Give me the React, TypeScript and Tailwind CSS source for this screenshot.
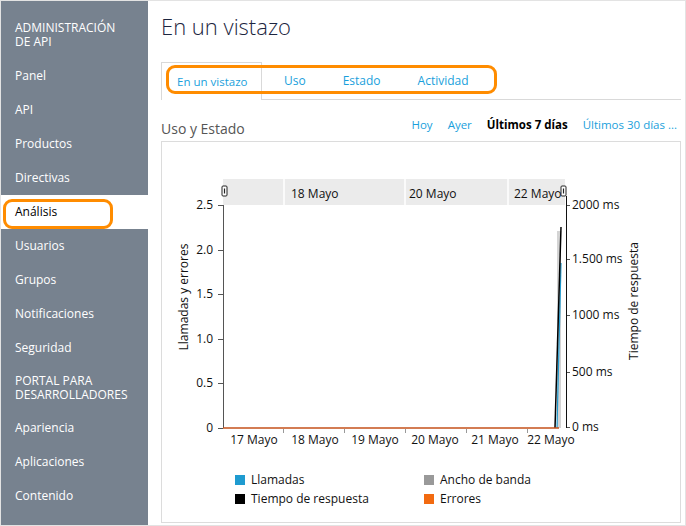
const navTop = ['Panel', 'API', 'Productos', 'Directivas', 'Análisis', 'Usuarios', 'Grupos', 'Notificaciones', 'Seguridad']
const navBottom = ['Apariencia', 'Aplicaciones', 'Contenido']

function Sidebar() {
  return (
    <aside className="w-[147px] shrink-0 bg-[#77828f] text-white text-[12px] pt-[20px] pb-[8px]">
      <div className="px-[14px] leading-[14px] mb-[10px]">
        ADMINISTRACIÓN
        <br />
        DE API
      </div>
      {navTop.map((item) => (
        <div
          key={item}
          className={
            item === 'Análisis'
              ? 'relative h-[34px] flex items-center px-[14px] bg-white text-black'
              : 'h-[34px] flex items-center px-[14px]'
          }
        >
          {item}
          {item === 'Análisis' && (
            <div className="absolute left-[2px] top-[4px] w-[110px] h-[30px] rounded-[9px] border-[3px] border-[#ff8c00]" />
          )}
        </div>
      ))}
      <div className="px-[14px] py-[9px] leading-[14px]">
        PORTAL PARA
        <br />
        DESARROLLADORES
      </div>
      {navBottom.map((item) => (
        <div key={item} className="h-[34px] flex items-center px-[14px]">
          {item}
        </div>
      ))}
    </aside>
  )
}

function Tabs() {
  return (
    <div className="relative flex items-end border-b border-[#d9d9d9] h-[38px] text-[12px] text-[#1a9fdc]">
      <div className="-mb-px h-[38px] w-[101px] border border-b-0 border-[#d9d9d9] bg-white flex items-center pl-[15px]">
        <span className="text-[11.5px]">En un vistazo</span>
      </div>
      <div className="h-[37px] flex items-center ml-[22px]">Uso</div>
      <div className="h-[37px] flex items-center ml-[37px]">Estado</div>
      <div className="h-[37px] flex items-center ml-[37px]">Actividad</div>
      <div className="absolute left-[5px] top-[3px] w-[331px] h-[29px] rounded-[9px] border-[3px] border-[#ff8c00]" />
    </div>
  )
}

function Handle({ x }: { x: number }) {
  return (
    <g>
      <rect x={x} y={44} width={5} height={10} rx={1} fill="white" stroke="#222" strokeWidth={1} />
      <line x1={x + 2.5} y1={46.5} x2={x + 2.5} y2={51.5} stroke="#222" strokeWidth={1.2} />
    </g>
  )
}

function Chart() {
  const leftTicks = [
    { y: 63, t: '2.5' },
    { y: 108, t: '2.0' },
    { y: 152, t: '1.5' },
    { y: 197, t: '1.0' },
    { y: 241, t: '0.5' },
    { y: 286, t: '0' },
  ]
  const rightTicks = [
    { y: 63, t: '2000 ms' },
    { y: 117, t: '1.500 ms' },
    { y: 173, t: '1000 ms' },
    { y: 230, t: '500 ms' },
    { y: 285, t: '0 ms' },
  ]
  const xLabels = [
    { x: 92, t: '17 Mayo' },
    { x: 153, t: '18 Mayo' },
    { x: 213, t: '19 Mayo' },
    { x: 273, t: '20 Mayo' },
    { x: 333, t: '21 Mayo' },
    { x: 389, t: '22 Mayo' },
  ]
  return (
    <svg width={517} height={314} className="block" style={{ fontFamily: '"Open Sans", sans-serif' }}>
      {/* range selector band */}
      <rect x={61} y={37} width={342} height={26} fill="#ebebeb" />
      {[122, 243, 346].map((x) => (
        <line key={x} x1={x} y1={37} x2={x} y2={63} stroke="white" strokeWidth={1.5} />
      ))}
      <text x={129} y={56} fontSize={12} fill="#111">18 Mayo</text>
      <text x={247} y={56} fontSize={12} fill="#111">20 Mayo</text>
      <text x={352} y={56} fontSize={12} fill="#111">22 Mayo</text>

      {/* left axis */}
      <line x1={61.5} y1={63} x2={61.5} y2={286} stroke="#555" strokeWidth={1} />
      {leftTicks.map((tk) => (
        <g key={tk.t}>
          <line x1={56} y1={tk.y + 0.5} x2={61} y2={tk.y + 0.5} stroke="#555" />
          <text x={51} y={tk.y + 4} fontSize={12} textAnchor="end" fill="#111">
            {tk.t}
          </text>
        </g>
      ))}
      <text
        transform="translate(26 155) rotate(-90)"
        fontSize={12}
        textAnchor="middle"
        fill="#111"
      >
        Llamadas y errores
      </text>

      {/* spike */}
      <rect x={395} y={89} width={4} height={197} fill="#d4d4d4" />
      <line x1={395} y1={286} x2={399} y2={121} stroke="#1e9bd0" strokeWidth={1.2} />
      <line x1={393} y1={286} x2={399} y2={85} stroke="#000" strokeWidth={1.5} />

      {/* right axis */}
      <line x1={404.5} y1={54} x2={404.5} y2={286} stroke="#111" strokeWidth={1} />
      {rightTicks.map((tk) => (
        <g key={tk.t}>
          <line x1={405} y1={tk.y + 0.5} x2={408} y2={tk.y + 0.5} stroke="#555" />
          <text x={410} y={tk.y + 4} fontSize={12} fill="#111">
            {tk.t}
          </text>
        </g>
      ))}
      <text
        transform="translate(476 159) rotate(-90)"
        fontSize={12}
        textAnchor="middle"
        fill="#111"
      >
        Tiempo de respuesta
      </text>

      {/* x axis */}
      <line x1={61} y1={286} x2={397} y2={286} stroke="#c4501a" strokeWidth={1.5} />
      {[121, 182, 243, 304, 365].map((x) => (
        <line key={x} x1={x + 0.5} y1={287} x2={x + 0.5} y2={291} stroke="#999" />
      ))}
      {xLabels.map((l) => (
        <text key={l.t} x={l.x} y={302} fontSize={12} textAnchor="middle" fill="#111">
          {l.t}
        </text>
      ))}

      <Handle x={60} />
      <Handle x={399} />
    </svg>
  )
}

function Legend() {
  const items = [
    { c: 'bg-[#1e9bd0]', t: 'Llamadas' },
    { c: 'bg-[#999999]', t: 'Ancho de banda' },
    { c: 'bg-[#000000]', t: 'Tiempo de respuesta' },
    { c: 'bg-[#f26a10]', t: 'Errores' },
  ]
  return (
    <div className="grid grid-cols-[189px_1fr] pl-[73px] mt-[14px] text-[12px] text-[#111]">
      {items.map((it) => (
        <div key={it.t} className="h-[19px] flex items-center gap-[6px]">
          <span className={`w-[10px] h-[10px] ${it.c}`} />
          {it.t}
        </div>
      ))}
    </div>
  )
}

export default function App() {
  return (
    <div
      className="w-[686px] h-[526px] flex bg-white border border-[#e3e3e3] overflow-hidden"
      style={{ fontFamily: '"Open Sans", "Noto Sans", sans-serif' }}
    >
      <Sidebar />
      <main className="flex-1 pl-[13px] pr-[4px]">
        <h1 className="text-[22px] font-light text-[#1c2540] leading-[30px] mt-[10px] mb-[21px]">En un vistazo</h1>
        <Tabs />
        <div className="flex items-end justify-between h-[41px] pb-[3px]">
          <span className="text-[14px] text-[#555] leading-[18px]">Uso y Estado</span>
          <div className="flex gap-[15px] text-[11.5px] text-[#1a9fdc] mb-[5px] pr-[4px]">
            <span>Hoy</span>
            <span>Ayer</span>
            <span className="font-bold text-black">Últimos 7 días</span>
            <span>Últimos 30 días ...</span>
          </div>
        </div>
        <div className="border border-[#dcdcdc] h-[382px]">
          <Chart />
          <Legend />
        </div>
      </main>
    </div>
  )
}
